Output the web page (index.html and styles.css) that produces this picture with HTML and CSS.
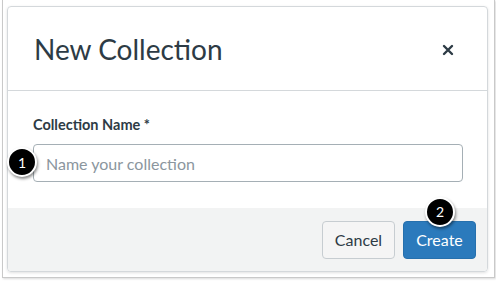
FILE: index.html
```html
<!DOCTYPE html>
<html lang="en">
<head>
  <meta charset="UTF-8" />
  <title>New Collection</title>
  <link rel="stylesheet" href="styles.css">
</head>
<body>
  <div class="frame">
    <div class="dialog">
      <div class="dialog-header">
        <h1>New Collection</h1>
        <button class="close" aria-label="Close">
          <svg width="12" height="12" viewBox="0 0 12 12"><path d="M2 2 L10 10 M10 2 L2 10" stroke="#2d3b45" stroke-width="2.4" stroke-linecap="round"/></svg>
        </button>
      </div>
      <div class="dialog-body">
        <label for="collectionName">Collection Name *</label>
        <div class="field">
          <input type="text" id="collectionName" placeholder="Name your collection" />
          <span class="badge badge-one">1</span>
        </div>
      </div>
      <div class="dialog-footer">
        <button class="btn">Cancel</button>
        <div class="create-wrap">
          <button class="btn btn-primary">Create</button>
          <span class="badge badge-two">2</span>
        </div>
      </div>
    </div>
  </div>
</body>
</html>
```

FILE: styles.css
```css
* {
  margin: 0;
  padding: 0;
  box-sizing: border-box;
  font-family: Lato, 'Noto Sans', sans-serif;
}
body {
  background: #fff;
  width: 496px;
  height: 281px;
  overflow: hidden;
}
.frame {
  margin-left: 2px;
  width: 493px;
  height: 278px;
  border: 1px solid #c9c9c9;
  border-top: none;
  box-shadow: 1px 1px 2px rgba(0,0,0,0.15);
  padding: 6px 6px 6px 4px;
}
.dialog {
  height: 266px;
  border: 1px solid #d4d8db;
  border-radius: 4px;
  box-shadow: 0 1px 3px rgba(0,0,0,0.12);
  display: flex;
  flex-direction: column;
}
.dialog-header {
  height: 84px;
  border-bottom: 1px solid #d4d8db;
  display: flex;
  justify-content: space-between;
  align-items: center;
  padding: 0 33px 0 26px;
}
.dialog-header h1 {
  font-size: 28px;
  font-weight: 400;
  color: #2d3b45;
}
.close {
  background: none;
  border: none;
  display: flex;
  margin-top: 2px;
}
.dialog-body {
  height: 117px;
  padding: 25px 24px 0 25px;
}
.dialog-body label {
  display: block;
  font-size: 14.5px;
  font-weight: 700;
  color: #2d3b45;
  margin-bottom: 11px;
}
.field {
  position: relative;
}
.field input {
  width: 100%;
  height: 38px;
  border: 1px solid #a5afb5;
  border-radius: 4px;
  padding: 0 12px;
  font-size: 16px;
  color: #2d3b45;
}
.field input::placeholder {
  color: #8b969e;
}
.dialog-footer {
  flex: 1;
  background: #f2f3f3;
  border-radius: 0 0 4px 4px;
  display: flex;
  justify-content: flex-end;
  align-items: center;
  gap: 8px;
  padding: 0 11px 0 0;
}
.btn {
  height: 38px;
  width: 73px;
  font-size: 16px;
  border-radius: 4px;
  border: 1px solid #c7cdd1;
  background: #f5f5f5;
  color: #2d3b45;
}
.btn-primary {
  background: #2b7abc;
  border-color: #2670ad;
  color: #fff;
}
.create-wrap {
  position: relative;
}
.badge {
  position: absolute;
  width: 30px;
  height: 30px;
  border-radius: 50%;
  background: #000;
  border: 2px solid #fff;
  box-shadow: 1px 2px 3px rgba(0,0,0,0.45);
  color: #fff;
  font-size: 14px;
  display: flex;
  align-items: center;
  justify-content: center;
}
.badge-one {
  left: -26px;
  top: 3px;
}
.badge-two {
  left: 22px;
  top: -24px;
}
```
